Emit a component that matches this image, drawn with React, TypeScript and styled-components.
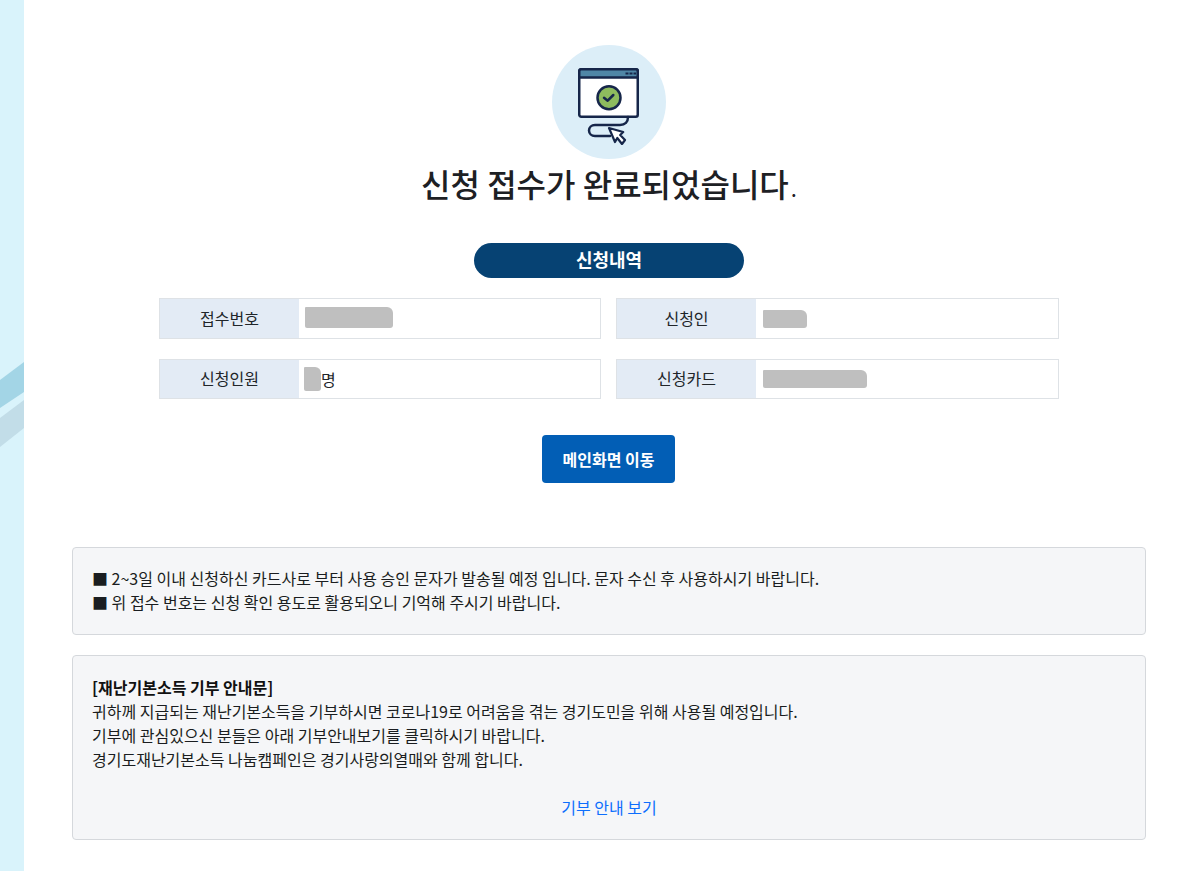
import React from 'react';
import styled, { createGlobalStyle } from 'styled-components';

const Global = createGlobalStyle`
  html, body {
    margin: 0;
    padding: 0;
    background: #fff;
    color: #212529;
    font-family: "Noto Sans CJK KR", "Noto Sans", sans-serif;
    overflow: hidden;
  }
`;

const Page = styled.div`
  display: flex;
  width: 1183px;
  height: 871px;
  overflow: hidden;
`;

const Side = styled.aside`
  position: relative;
  flex: 0 0 24px;
  background: #d9f3fb;
`;

const Stripes = styled.svg`
  position: absolute;
  left: 0;
  top: 340px;
  width: 24px;
  height: 130px;
`;

const Main = styled.main`
  flex: 0 0 1074px;
  margin-left: 48px;
  padding-top: 45px;
  display: flex;
  flex-direction: column;
  align-items: center;
`;

const IconCircle = styled.div`
  width: 114px;
  height: 114px;
  border-radius: 50%;
  background: #dceef8;
  display: flex;
  align-items: center;
  justify-content: center;
`;

const Title = styled.h1`
  margin: 1px 0 3px;
  height: 46px;
  line-height: 46px;
  font-size: 32px;
  font-weight: 500;
  color: #1d2024;
`;

const Period = styled.span`
  font-size: 22px;
  font-weight: 400;
  margin-left: 2px;
`;

const Pill = styled.div`
  margin-top: 34px;
  width: 270px;
  height: 35px;
  border-radius: 18px;
  background: #064273;
  color: #fff;
  font-size: 18px;
  font-weight: 700;
  line-height: 32px;
  text-align: center;
`;

const Grid = styled.div`
  margin-top: 20px;
  width: 900px;
  display: grid;
  grid-template-columns: 442px 443px;
  column-gap: 15px;
  row-gap: 20px;
`;

const Field = styled.div<{ $h: number }>`
  display: flex;
  height: ${(p) => p.$h}px;
  box-sizing: border-box;
  border: 1px solid #dee2e6;
`;

const FieldLabel = styled.div`
  flex: 0 0 139px;
  padding-bottom: 2px;
  background: #e3ebf5;
  display: flex;
  align-items: center;
  justify-content: center;
  font-size: 16px;
  color: #212529;
`;

const FieldValue = styled.div`
  flex: 1;
  display: flex;
  align-items: center;
  padding-left: 6px;
  font-size: 16px;
  color: #212529;
`;

// smeared-out personal data in the screenshot
const Redact = styled.span<{ $w: number; $h: number; $left?: number; $lift?: number }>`
  display: block;
  width: ${(p) => p.$w}px;
  height: ${(p) => p.$h}px;
  margin-left: ${(p) => p.$left ?? 0}px;
  margin-bottom: ${(p) => p.$lift ?? 0}px;
  background: #bfbfbf;
  border-radius: 1px 6px 3px 2px;
`;

const MainButton = styled.button`
  margin: 36px 1px 0 0;
  width: 133px;
  height: 48px;
  border: 0;
  border-radius: 4px;
  background: #025eb5;
  color: #fff;
  font-family: inherit;
  font-size: 16px;
  font-weight: 700;
  padding: 0;
`;

const Notice = styled.section<{ $top: number; $h: number; $pad: number }>`
  box-sizing: border-box;
  width: 1074px;
  height: ${(p) => p.$h}px;
  margin-top: ${(p) => p.$top}px;
  padding: ${(p) => p.$pad}px 19px 0;
  background: #f5f6f8;
  border: 1px solid #d5d8dc;
  border-radius: 4px;
  font-size: 16px;
  line-height: 24px;
  color: #1a1d20;
`;

const Line = styled.div`
  white-space: nowrap;
`;

const Heading = styled(Line)`
  font-weight: 700;
  color: #111;
`;

const LinkRow = styled.div`
  margin-top: 24px;
  text-align: center;
`;

const DonateLink = styled.a`
  color: #0d6efd;
  text-decoration: none;
`;

function DoneIcon() {
  return (
    <svg width="64" height="86" viewBox="0 0 64 86" fill="none" stroke="#16264a" strokeWidth="2.5">
      <rect x="2.250" y="10.250" width="58.500" height="47.500" rx="2" fill="#fff" />
      <path d="M2.250 18.500V12.250a2 2 0 0 1 2-2h54.500a2 2 0 0 1 2 2V18.500z" fill="#4f86a6" />
      <path d="M48.500 14.500h3M52.500 14.500h3M56.500 14.500h2.500" strokeWidth="2" />
      <circle cx="32" cy="38.700" r="11.500" fill="#8dbb5e" />
      <path d="M27 38.700l3.700 3 5.600-5.700" strokeLinecap="round" strokeLinejoin="round" />
      <path d="M51 58c0 5-3 8-8 8H18c-3.500 0-6 2.500-6 5.500s2.500 5.500 6 5.500h15" strokeLinecap="round" />
      <path d="M32 69l6 14 2.300-4 4.700 6 3-4-4.800-5 3-3z" fill="#fff" strokeWidth="2.200" strokeLinejoin="round" />
    </svg>
  );
}

export default function App() {
  return (
    <Page>
      <Global />
      <Side>
        <Stripes viewBox="0 0 24 130">
          <polygon points="0,40 24,22 24,52 0,68" fill="#a3d5e6" />
          <polygon points="0,78 24,60 24,88 0,107" fill="#c2dde8" />
        </Stripes>
      </Side>
      <Main>
        <IconCircle>
          <DoneIcon />
        </IconCircle>
        <Title>신청 접수가 완료되었습니다<Period>.</Period></Title>
        <Pill>신청내역</Pill>
        <Grid>
          <Field $h={41}>
            <FieldLabel>접수번호</FieldLabel>
            <FieldValue><Redact $w={88} $h={21} $lift={3} /></FieldValue>
          </Field>
          <Field $h={41}>
            <FieldLabel>신청인</FieldLabel>
            <FieldValue><Redact $w={44} $h={18} $left={1} /></FieldValue>
          </Field>
          <Field $h={40}>
            <FieldLabel>신청인원</FieldLabel>
            <FieldValue><Redact $w={17} $h={24} $left={-1} />명</FieldValue>
          </Field>
          <Field $h={40}>
            <FieldLabel>신청카드</FieldLabel>
            <FieldValue><Redact $w={104} $h={18} $left={1} /></FieldValue>
          </Field>
        </Grid>
        <MainButton>메인화면 이동</MainButton>
        <Notice $top={64} $h={88} $pad={18}>
          <Line>■ 2~3일 이내 신청하신 카드사로 부터 사용 승인 문자가 발송될 예정 입니다. 문자 수신 후 사용하시기 바랍니다.</Line>
          <Line>■ 위 접수 번호는 신청 확인 용도로 활용되오니 기억해 주시기 바랍니다.</Line>
        </Notice>
        <Notice $top={20} $h={185} $pad={19}>
          <Heading>[재난기본소득 기부 안내문]</Heading>
          <Line>귀하께 지급되는 재난기본소득을 기부하시면 코로나19로 어려움을 겪는 경기도민을 위해 사용될 예정입니다.</Line>
          <Line>기부에 관심있으신 분들은 아래 기부안내보기를 클릭하시기 바랍니다.</Line>
          <Line>경기도재난기본소득 나눔캠페인은 경기사랑의열매와 함께 합니다.</Line>
          <LinkRow><DonateLink href="#">기부 안내 보기</DonateLink></LinkRow>
        </Notice>
      </Main>
    </Page>
  );
}
